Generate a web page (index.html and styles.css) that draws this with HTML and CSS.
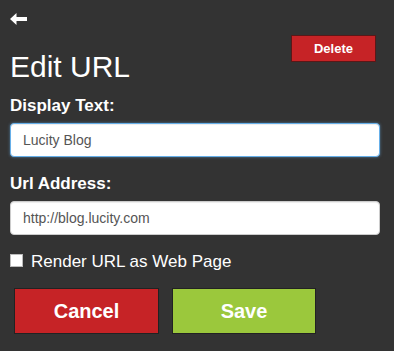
FILE: index.html
```html
<!DOCTYPE html>
<html>
<head>
<meta charset="utf-8">
<link rel="stylesheet" href="styles.css">
</head>
<body>
<div class="page">
  <div class="header">
    <div class="header-left">
      <svg class="back" width="17" height="12" viewBox="0 0 17 12"><polygon points="0,6 6.5,0 6.5,4 17,4 17,8 6.5,8 6.5,12" fill="#fff"/></svg>
      <h1 class="title">Edit URL</h1>
    </div>
    <button class="btn-delete">Delete</button>
  </div>
  <label class="field-label">Display Text:</label>
  <input class="field-input focused" type="text" value="Lucity Blog">
  <label class="field-label second">Url Address:</label>
  <input class="field-input" type="text" value="http://blog.lucity.com">
  <div class="check-row">
    <input class="check" type="checkbox">
    <span class="check-label">Render URL as Web Page</span>
  </div>
  <div class="actions">
    <button class="btn btn-cancel">Cancel</button>
    <button class="btn btn-save">Save</button>
  </div>
</div>
</body>
</html>
```
FILE: styles.css
```css
html, body {
  margin: 0;
  padding: 0;
  background: #333333;
  font-family: "Liberation Sans", Arial, sans-serif;
  color: #fff;
}
.page {
  padding: 13px 14px 0 10px;
}
.header {
  display: flex;
  justify-content: space-between;
  align-items: flex-start;
}
.header-left {
  display: flex;
  flex-direction: column;
}
.back {
  display: block;
}
.title {
  margin: 25px 0 0 0;
  font-size: 30px;
  line-height: 34px;
  font-weight: normal;
  color: #fff;
}
.btn-delete {
  margin: 22px 4px 0 0;
  width: 85px;
  height: 27px;
  padding: 0;
  box-sizing: border-box;
  background: #c62326;
  border: 1px solid #5a1818;
  color: #fff;
  font-family: "Liberation Sans", Arial, sans-serif;
  font-weight: bold;
  font-size: 13px;
  line-height: 15px;
}
.field-label {
  display: block;
  margin-top: 12px;
  font-size: 17px;
  line-height: 20px;
  font-weight: bold;
  color: #fff;
}
.field-label.second {
  margin-top: 17px;
}
.field-input {
  display: block;
  box-sizing: border-box;
  width: 100%;
  height: 34px;
  margin: 7px 0 0 0;
  padding: 6px 12px;
  border: 1px solid #ccc;
  border-radius: 4px;
  background: #fff;
  color: #555;
  font-family: "Liberation Sans", Arial, sans-serif;
  font-size: 14px;
  line-height: 20px;
  box-shadow: inset 0 1px 1px rgba(0,0,0,0.075);
  outline: none;
}
.field-input.focused {
  border-color: #66afe9;
  box-shadow: inset 0 1px 1px rgba(0,0,0,0.075), 0 0 3px rgba(102,175,233,0.6);
}
.check-row {
  display: flex;
  align-items: flex-start;
  margin-top: 17px;
  height: 20px;
}
.check {
  appearance: none;
  -webkit-appearance: none;
  width: 13px;
  height: 13px;
  margin: 2px 8px 0 0;
  padding: 0;
  box-sizing: border-box;
  background: #fff;
  border: 1px solid #bbb;
  border-radius: 0;
}
.check-label {
  font-size: 17px;
  line-height: 20px;
  color: #fff;
}
.actions {
  display: flex;
  gap: 13px;
  margin: 16px 0 0 4px;
}
.btn {
  width: 145px;
  height: 46px;
  box-sizing: border-box;
  padding: 0;
  border: 1px solid #222;
  color: #fff;
  font-family: "Liberation Sans", Arial, sans-serif;
  font-weight: bold;
  font-size: 20px;
  line-height: 23px;
}
.btn-cancel {
  background: #c62326;
}
.btn-save {
  background: #9bc83c;
  width: 144px;
}
```
